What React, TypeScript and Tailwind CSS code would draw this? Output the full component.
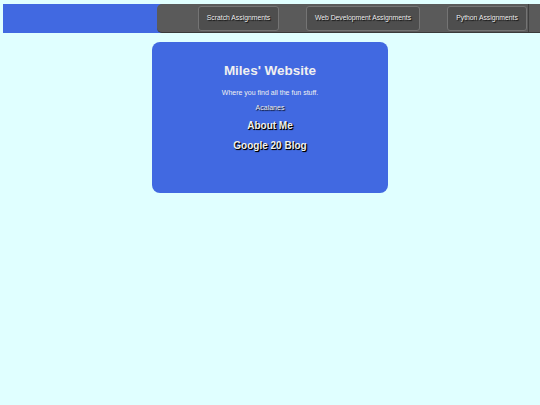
export default function App() {
  const navs: [string, string][] = [
    ["Scratch Assignments", "w-[81px]"],
    ["Web Development Assignments", "w-[114px]"],
    ["Python Assignments", "w-[80px]"],
  ];
  return (
    <div className="min-h-[405px] w-full bg-[#e0ffff] pt-[4px] font-['Liberation_Sans',Arial,sans-serif]">
      <div className="ml-[3px] flex h-[29px] bg-[#4169e1]">
        <div className="ml-[154px] flex flex-1 items-center gap-[27px] overflow-hidden rounded-l-[5px] border-b border-[#3a3a3a] bg-[#5a5a5a] pl-[41px]">
          {navs.map(([n, w]) => (
            <div
              key={n}
              className={`flex h-[25px] shrink-0 items-center justify-center whitespace-nowrap rounded-[3px] border border-[#747474] bg-[#4e4e4e] text-[6.8px] text-[#f0f0f0] [text-shadow:1px_1px_1px_#000] ${w}`}
            >
              {n}
            </div>
          ))}
          <div className="ml-[-26px] h-[29px] flex-1 border-l border-[#3e3e3e]" />
        </div>
      </div>
      <div className="mx-auto mt-[9px] flex h-[151px] w-[236px] flex-col items-center rounded-[8px] bg-[#4169e1] pt-[21px] text-[#f0f0f0]">
        <div className="text-[13.5px] font-bold leading-[16px]">Miles' Website</div>
        <div className="mt-[9px] text-[7px] leading-[9px]">Where you find all the fun stuff.</div>
        <div className="mt-[6px] text-[7px] leading-[9px] [text-shadow:1px_1px_1px_#000]">Acalanes</div>
        <div className="mt-[8px] text-[10px] font-bold leading-[12px] [text-shadow:1px_1px_1px_#000,1px_1px_0_#000]">About Me</div>
        <div className="mt-[8px] text-[10px] font-bold leading-[12px] [text-shadow:1px_1px_1px_#000,1px_1px_0_#000]">Google 20 Blog</div>
      </div>
    </div>
  );
}
